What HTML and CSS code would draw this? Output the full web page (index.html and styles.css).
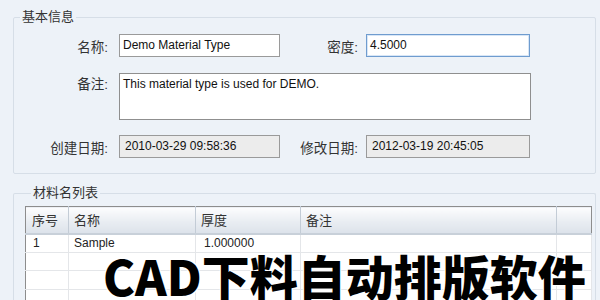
FILE: index.html
```html
<!DOCTYPE html>
<html lang="zh-CN">
<head>
    <meta charset="UTF-8">
    <title>材料类型</title>
    <link rel="stylesheet" href="styles.css">
</head>
<body>
<div class="page">
    <fieldset class="group">
        <legend>基本信息</legend>
        <div class="form">
            <label class="lbl">名称:</label>
            <div class="box">Demo Material Type</div>
            <label class="lbl lbl2">密度:</label>
            <div class="box focus">4.5000</div>

            <label class="lbl top">备注:</label>
            <div class="box memo">This material type is used for DEMO.</div>

            <label class="lbl">创建日期:</label>
            <div class="box ro">2010-03-29 09:58:36</div>
            <label class="lbl lbl2">修改日期:</label>
            <div class="box ro">2012-03-19 20:45:05</div>
        </div>
    </fieldset>

    <fieldset class="group list">
        <legend>材料名列表</legend>
        <table class="grid">
            <thead>
            <tr>
                <th class="c1">序号</th>
                <th class="c2">名称</th>
                <th class="c3">厚度</th>
                <th class="c4">备注</th>
                <th class="c5"></th>
            </tr>
            </thead>
            <tbody>
            <tr><td>1</td><td>Sample</td><td>1.000000</td><td></td><td></td></tr>
            <tr><td></td><td></td><td></td><td></td><td></td></tr>
            <tr><td></td><td></td><td></td><td></td><td></td></tr>
            <tr><td></td><td></td><td></td><td></td><td></td></tr>
            </tbody>
        </table>
    </fieldset>

    <div class="caption">CAD下料自动排版软件</div>
</div>
</body>
</html>
```

FILE: styles.css
```css
*{
    margin: 0;
    padding: 0;
    box-sizing: border-box;
}
html,body{
    width: 600px;
    height: 300px;
    overflow: hidden;
}
body{
    background: #edf2f8;
    font-family: "Liberation Sans", "Noto Sans CJK SC", sans-serif;
    font-size: 13px;
    color: #222;
}
.page{
    position: relative;
    height: 300px;
    padding-left: 13px;
}
.group{
    width: 583px;
    border: 1px solid #d6dee7;
    border-radius: 2px;
    padding: 9px 0 12px 0;
}
.group legend{
    margin-left: 6px;
    padding: 0 2px;
    font-size: 13px;
    line-height: 16px;
    color: #333;
}
.group:first-child{
    margin-top: 9px;
}
.form{
    display: grid;
    grid-template-columns: 105px 161px 86px 164px;
    grid-template-rows: 23px 47px 23px;
    row-gap: 17px;
    align-items: center;
}
.form .memo{
    grid-column: 2 / 5;
    height: 47px;
    width: 412px;
}
.form > :nth-child(6){
    margin-top: -3px;
}
.form > :nth-child(n+7){
    margin-top: -6px;
}
.lbl{
    text-align: right;
    padding-right: 11px;
    font-size: 13.5px;
    color: #333;
}
.lbl2{
    padding-right: 8px;
}
.lbl.top{
    align-self: start;
    padding-top: 2px;
    margin-top: -3px;
}
.box{
    height: 23px;
    border: 1px solid #9a9a9a;
    background: #fff;
    font-size: 12px;
    line-height: 21px;
    padding-left: 3px;
    color: #111;
}
.box.memo{
    line-height: 20px;
    border-color: #8f8f8f;
}
.box.focus{
    border-color: #6f9ccf;
    box-shadow: inset 0 0 0 1px #d8e6f6;
}
.box.ro{
    background: #ececec;
    padding-left: 5px;
}
.list{
    margin-top: 11px;
    padding: 5px 3px 0 11px;
    border-bottom: none;
    height: 130px;
}
.grid{
    width: 567px;
    border-collapse: collapse;
    border: 1px solid #8d8d8d;
    border-bottom: none;
    background: #fff;
    table-layout: fixed;
}
.grid th{
    height: 27px;
    text-align: left;
    font-weight: normal;
    font-size: 13px;
    color: #333;
    padding-left: 5px;
    background: linear-gradient(#fdfdfe, #e9edf2 55%, #dce2ea);
    border-right: 1px solid #c3ccd6;
    border-bottom: 2px solid #c8d0d9;
}
.grid th:last-child{
    border-right: none;
}
.grid .c1{ width: 43px; padding-left: 6px; }
.grid .c2{ width: 127px; }
.grid .c3{ width: 105px; }
.grid .c4{ width: 256px; }
.grid td{
    height: 18.5px;
    font-size: 12px;
    color: #222;
    padding-left: 5px;
    border-right: 1px solid #e4e6e9;
    border-bottom: 1px solid #e4e6e9;
}
.grid td:first-child{
    padding-left: 7px;
}
.grid td:nth-child(3){
    padding-left: 8px;
}
.caption{
    position: absolute;
    left: 103px;
    top: 242px;
    font-family: "Noto Sans CJK SC", sans-serif;
    font-weight: 900;
    font-size: 48px;
    line-height: 48px;
    color: #000;
    white-space: nowrap;
    text-shadow: 1px 1px 0 #fff, -1px -1px 0 #fff, 1px -1px 0 #fff, -1px 1px 0 #fff;
}
```
